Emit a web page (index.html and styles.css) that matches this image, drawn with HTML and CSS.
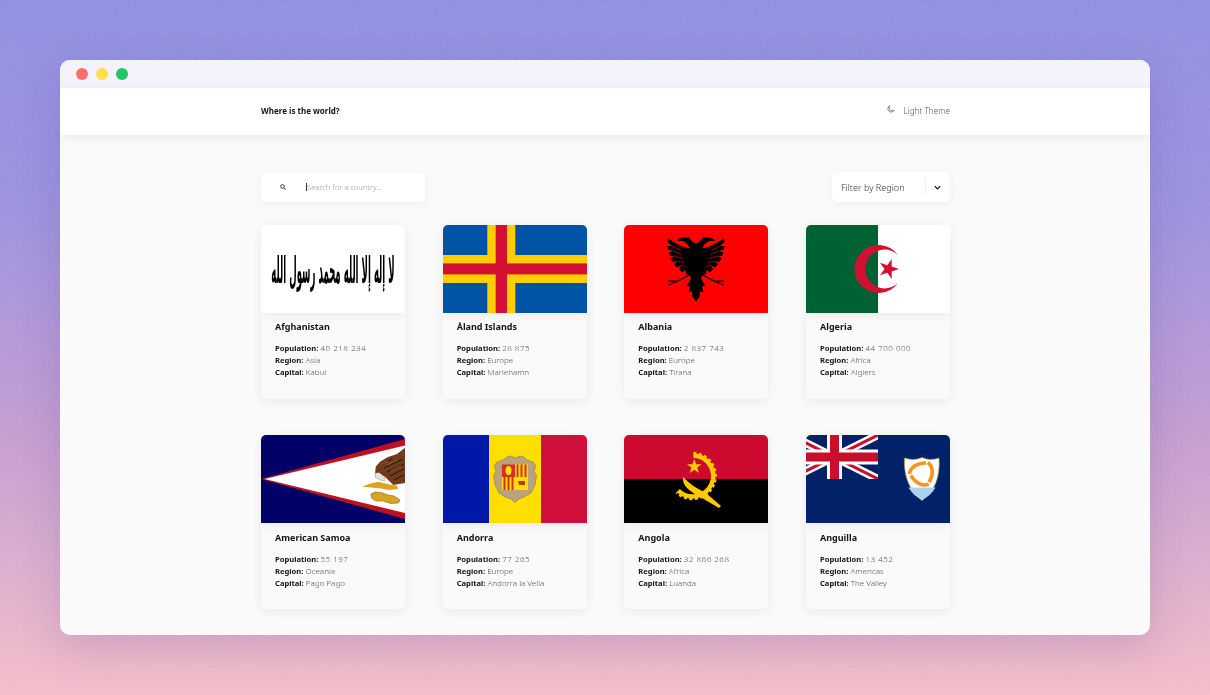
FILE: index.html
```html
<!DOCTYPE html>
<html lang="en">
<head>
    <meta charset="UTF-8">
    <meta name="viewport" content="width=device-width, initial-scale=1.0">
    <title>Where is the world?</title>
    <link rel="stylesheet" href="styles.css">
</head>
<body>
    <svg class="grain" width="1210" height="695" aria-hidden="true">
        <filter id="noise"><feTurbulence type="fractalNoise" baseFrequency="0.8" numOctaves="2" seed="4"/><feColorMatrix type="saturate" values="0"/></filter>
        <rect width="1210" height="695" filter="url(#noise)"/>
    </svg>

    <div class="window">
        <div class="titlebar">
            <span class="dot dot-red"></span>
            <span class="dot dot-yellow"></span>
            <span class="dot dot-green"></span>
        </div>

        <header class="header">
            <div class="wrap header-row">
                <h1 class="logo">Where is the world?</h1>
                <div class="theme">
                    <svg class="moon" viewBox="0 0 10 10" width="8" height="8"><path d="M3.600 .8A4.200 4.200 0 1 0 9 6.600 4 4 0 0 1 3.600 .8Z" fill="none" stroke="#444" stroke-width=".8"/></svg>
                    <span>Light Theme</span>
                </div>
            </div>
        </header>

        <main class="wrap">
            <div class="tools">
                <div class="search">
                    <svg class="lens" viewBox="0 0 10 10" width="6" height="6"><circle cx="4" cy="4" r="3" fill="none" stroke="#222" stroke-width="1.4"/><path d="M6.400 6.400 9.400 9.400" stroke="#222" stroke-width="1.6"/></svg>
                    <span class="caret"></span>
                    <span class="placeholder">Search for a country...</span>
                </div>
                <div class="filter">
                    <span class="filter-label">Filter by Region</span>
                    <span class="filter-line"></span>
                    <svg class="chevron" viewBox="0 0 10 6" width="7" height="5"><path d="M1 1 5 5 9 1" fill="none" stroke="#111" stroke-width="1.8"/></svg>
                </div>
            </div>

            <div class="grid">
                <article class="card">
                    <svg class="flag" viewBox="0 0 144 88" preserveAspectRatio="none">
                        <rect width="144" height="88" fill="#fff"/>
                        <text class="shahada" transform="translate(72 58) scale(1 4.300)" text-anchor="middle" direction="rtl">لا إله إلا الله محمد رسول الله</text>
                    </svg>
                    <div class="card-body">
                        <h2 class="name">Afghanistan</h2>
                        <p class="info"><b>Population:</b> <span class="num">40 218 234</span></p>
                        <p class="info"><b>Region:</b> Asia</p>
                        <p class="info"><b>Capital:</b> Kabul</p>
                    </div>
                </article>

                <article class="card">
                    <svg class="flag" viewBox="0 0 144 88" preserveAspectRatio="none">
                        <rect width="144" height="88" fill="#0053a5"/>
                        <rect x="44.300" width="28" height="88" fill="#ffce00"/>
                        <rect y="30" width="144" height="28" fill="#ffce00"/>
                        <rect x="52.700" width="11.300" height="88" fill="#d21034"/>
                        <rect y="38.400" width="144" height="11" fill="#d21034"/>
                    </svg>
                    <div class="card-body">
                        <h2 class="name">Åland Islands</h2>
                        <p class="info"><b>Population:</b> <span class="num">28 875</span></p>
                        <p class="info"><b>Region:</b> Europe</p>
                        <p class="info"><b>Capital:</b> Mariehamn</p>
                    </div>
                </article>

                <article class="card">
                    <svg class="flag" viewBox="0 0 144 88" preserveAspectRatio="none">
                        <defs>
                            <g id="eagle-half">
                                <path d="M71 19 75.300 17 79.300 12.300 87.700 13 91 15.700 84.300 16.300 80 19.700 78.500 23.500 86 21.500 94 17 100 13.500 100.500 17 96 21 100.500 21 100 24.500 95 26 99.500 27.500 98 31 93.500 31 97.500 33 95.500 37 90.500 36 94 39 91 42.500 87 40.500 89 44 86 47.500 82.500 45 82 49 79 50 77 53 79 57 81 60.500 78 61.500 79.500 67 76 66.500 75.500 72 72 76 71 76Z" fill="#000"/>
                                <path d="M96 21 87 25.500M95 26 86 29.500M93.500 31 85 33.500M90.500 36 84 37.500M87 40.500 82 41.500" stroke="#f00" stroke-width=".6" fill="none"/>
                                <path d="M79 50 91 56.500 99.500 56M91 56.500 99.500 60" stroke="#000" stroke-width="1.300" fill="none"/>
                            </g>
                        </defs>
                        <rect width="144" height="88" fill="#f00"/>
                        <use href="#eagle-half"/>
                        <use href="#eagle-half" transform="translate(144 0) scale(-1 1)"/>
                    </svg>
                    <div class="card-body">
                        <h2 class="name">Albania</h2>
                        <p class="info"><b>Population:</b> <span class="num">2 837 743</span></p>
                        <p class="info"><b>Region:</b> Europe</p>
                        <p class="info"><b>Capital:</b> Tirana</p>
                    </div>
                </article>

                <article class="card">
                    <svg class="flag" viewBox="0 0 144 88" preserveAspectRatio="none">
                        <rect width="144" height="88" fill="#fff"/>
                        <rect width="72" height="88" fill="#006233"/>
                        <path d="M92 30A24 24 0 1 0 92 58 19.400 19.400 0 1 1 92 30Z" fill="#d21034"/>
                        <path d="M93 44 85.700 46.400 85.700 54 81.300 47.800 74 50.200 78.500 44 74 37.800 81.300 40.200 85.700 34 85.700 41.600Z" fill="#d21034"/>
                    </svg>
                    <div class="card-body">
                        <h2 class="name">Algeria</h2>
                        <p class="info"><b>Population:</b> <span class="num">44 700 000</span></p>
                        <p class="info"><b>Region:</b> Africa</p>
                        <p class="info"><b>Capital:</b> Algiers</p>
                    </div>
                </article>

                <article class="card">
                    <svg class="flag" viewBox="0 0 144 88" preserveAspectRatio="none">
                        <rect width="144" height="88" fill="#000066"/>
                        <path d="M0 44 144 4V84Z" fill="#bd1021"/>
                        <path d="M3.500 44 144 10.500V78Z" fill="#fff"/>
                        <path d="M114.700 31.700 119 26.700 127 22 136 19 143.300 13.300 144 13.300V48L132.300 50 124 41.700 114 40Z" fill="#6e3b1c"/>
                        <path d="M121 29 131 24M123 33 142 24M126 37 143 29M129 41 143 34M133 45 143 40" stroke="#3a1a0a" stroke-width="1.200" fill="none"/>
                        <path d="M120 29 128 26M126 30 136 25M130 36 140 31" stroke="#a0662f" stroke-width=".8" fill="none"/>
                        <path d="M114 38.300 118 37.500 124 42 123.300 46 119 45 114.500 42.500Z" fill="#e4e2da" stroke="#555" stroke-width=".3"/>
                        <path d="M101.300 51.700 108 49 117.300 46.700 122 48 130.700 50 136 50.500 137 54 128 55 120 53.500 110 52.500Z" fill="#d9a520"/>
                        <path d="M110 59 114 57 120 57.500 127 60 133 61 139 65 137.500 68 130 68.500 122 66 115 66 110.500 63Z" fill="#d9a520" stroke="#6b4a10" stroke-width=".5"/>
                    </svg>
                    <div class="card-body">
                        <h2 class="name">American Samoa</h2>
                        <p class="info"><b>Population:</b> <span class="num">55 197</span></p>
                        <p class="info"><b>Region:</b> Oceania</p>
                        <p class="info"><b>Capital:</b> Pago Pago</p>
                    </div>
                </article>

                <article class="card">
                    <svg class="flag" viewBox="0 0 144 88" preserveAspectRatio="none">
                        <rect width="46" height="88" fill="#0018a8"/>
                        <rect x="46" width="52" height="88" fill="#fedf00"/>
                        <rect x="98" width="46" height="88" fill="#d0103a"/>
                        <path d="M54 27 60 25 64 22 68 21 72 23 77 21 81 22 84 25 90 27 93 31 91 36 93.500 41 92 50 88 58 81 62 76 64 72 67.500 68 64 62 62 56 58 52 50 50.500 41 53 36 51 31Z" fill="#b9a27c" stroke="#8f7b58" stroke-width=".6"/>
                        <rect x="59" y="29.500" width="13" height="12.500" fill="#d8301f"/>
                        <ellipse cx="65.500" cy="35.500" rx="3" ry="4.500" fill="#fedf00"/>
                        <rect x="72" y="29.500" width="13" height="12.500" fill="#fedf00"/>
                        <path d="M74.500 29.500V42M78.500 29.500V42M82.500 29.500V42" stroke="#d8301f" stroke-width="2"/>
                        <rect x="59" y="42" width="13" height="13" fill="#fedf00"/>
                        <path d="M61.500 42V55M65.500 42V55M69.500 42V55" stroke="#d8301f" stroke-width="2"/>
                        <rect x="72" y="42" width="13" height="13" fill="#fedf00"/>
                        <path d="M75 46H82V50H76Z" fill="#c9321d"/>
                    </svg>
                    <div class="card-body">
                        <h2 class="name">Andorra</h2>
                        <p class="info"><b>Population:</b> <span class="num">77 265</span></p>
                        <p class="info"><b>Region:</b> Europe</p>
                        <p class="info"><b>Capital:</b> Andorra la Vella</p>
                    </div>
                </article>

                <article class="card">
                    <svg class="flag" viewBox="0 0 144 88" preserveAspectRatio="none">
                        <rect width="144" height="44" fill="#cc092f"/>
                        <rect y="44" width="144" height="44" fill="#000"/>
                        <path d="M69.400 20.500A20.500 20.500 0 1 1 54.200 55.500" fill="none" stroke="#ffcb00" stroke-width="4.500"/>
                        <path d="M69.400 18A23 23 0 1 1 52.400 57.300" fill="none" stroke="#ffcb00" stroke-width="2.500" stroke-dasharray="3 2.500"/>
                        <path d="M70.300 24 72.100 29.300 77.700 29.300 73.200 32.600 74.900 38 70.300 34.700 65.700 38 67.400 32.600 62.900 29.300 68.500 29.300Z" fill="#ffcb00"/>
                        <path d="M59.300 41.700C57 50 66 57 78 63L95 73 97 71 82 58C74 54 65 49 59.300 41.700Z" fill="#ffcb00"/>
                    </svg>
                    <div class="card-body">
                        <h2 class="name">Angola</h2>
                        <p class="info"><b>Population:</b> <span class="num">32 866 268</span></p>
                        <p class="info"><b>Region:</b> Africa</p>
                        <p class="info"><b>Capital:</b> Luanda</p>
                    </div>
                </article>

                <article class="card">
                    <svg class="flag" viewBox="0 0 144 88" preserveAspectRatio="none">
                        <rect width="144" height="88" fill="#012169"/>
                        <svg x="0" y="0" width="72" height="44" viewBox="0 0 72 44">
                            <path d="M-16 0 72 44M72 0-16 44" stroke="#fff" stroke-width="8"/>
                            <path d="M-16 0 72 44M72 0-16 44" stroke="#c8102e" stroke-width="3"/>
                            <path d="M28.500 0V44M0 22H72" stroke="#fff" stroke-width="15"/>
                            <path d="M28.500 0V44M0 22H72" stroke="#c8102e" stroke-width="9"/>
                        </svg>
                        <path d="M98.500 23C105 25 110 25 116 22.500 122 25 127 25 133 23 134 36 132 54 116 65.500 101 54 97.500 36 98.500 23Z" fill="#fff" stroke="#9a9a3c" stroke-width=".7"/>
                        <path d="M102.500 52.500H129.500C126.500 58 122 62 116 65 110 62 105.500 58 102.500 52.500Z" fill="#a9d3ee"/>
                        <g fill="none" stroke="#f7931e" stroke-width="3.600">
                            <path d="M103.500 39C104 33 110 28 120 28"/>
                            <path d="M103.500 39C104 33 110 28 120 28" transform="rotate(120 116 38.500)"/>
                            <path d="M103.500 39C104 33 110 28 120 28" transform="rotate(240 116 38.500)"/>
                        </g>
                    </svg>
                    <div class="card-body">
                        <h2 class="name">Anguilla</h2>
                        <p class="info"><b>Population:</b> <span class="num">13 452</span></p>
                        <p class="info"><b>Region:</b> Americas</p>
                        <p class="info"><b>Capital:</b> The Valley</p>
                    </div>
                </article>
            </div>
        </main>
    </div>
</body>
</html>
```

FILE: styles.css
```css
*{padding: 0; margin: 0; box-sizing: border-box;}

html, body{height: 100%; overflow: hidden;}

body{
    position: relative;
    padding: 60px;
    background: linear-gradient(180deg, #8e8de2 0%, #9a90de 30%, #c29bd0 62%, #f3bcc8 100%);
    font-family: "Noto Sans", "Open Sans", sans-serif;
    color: #111517;
}

.grain{
    position: absolute;
    left: 0;
    top: 0;
    opacity: 0.4;
    mix-blend-mode: soft-light;
}

.window{
    position: relative;
    height: 575px;
    border-radius: 10px;
    overflow: hidden;
    background: #fafafa;
    box-shadow: 0 12px 40px rgba(70, 50, 130, 0.18);
}

.titlebar{
    height: 28px;
    padding: 8px 16px;
    display: flex;
    gap: 8px;
    background: #f4f3fb;
}
.dot{width: 12px; height: 12px; border-radius: 50%;}
.dot-red{background: #ff6d6d;}
.dot-yellow{background: #ffdf47;}
.dot-green{background: #20c764;}

.wrap{
    width: 689px;
    margin-left: 201px;
}

.header{
    height: 47px;
    background: #fff;
    box-shadow: 0 2px 10px rgba(0, 0, 0, 0.07);
}
.header-row{
    height: 100%;
    display: flex;
    align-items: center;
    justify-content: space-between;
}
.logo{margin-bottom: 3px; font-size: 8px; font-weight: 700;}
.theme{
    display: flex;
    align-items: center;
    gap: 9px;
    margin-bottom: 3px;
    font-size: 8.200px;
    font-weight: 300;
    color: #555;
}
.moon{margin-bottom: 2px;}

.tools{
    margin-top: 37px;
    display: flex;
    align-items: center;
    justify-content: space-between;
}
.search{
    width: 164px;
    height: 29px;
    padding-left: 19px;
    display: flex;
    align-items: center;
    background: #fff;
    border-radius: 5px;
    box-shadow: 0 2px 10px rgba(0, 0, 0, 0.05);
}
.caret{
    width: 1px;
    height: 8px;
    margin-left: 20px;
    background: #333;
}
.placeholder{font-size: 7.600px; font-weight: 300; color: #999;}

.filter{
    width: 118px;
    height: 30px;
    padding-left: 9px;
    display: flex;
    align-items: center;
    background: #fff;
    border-radius: 5px;
    box-shadow: 0 2px 10px rgba(0, 0, 0, 0.05);
    font-size: 9.100px;
    font-weight: 300;
    color: #333;
}
.filter-label{width: 84px; white-space: nowrap;}
.filter-line{width: 1px; height: 16px; background: #eee;}
.chevron{margin-left: 8px;}

.grid{
    margin-top: 23px;
    display: grid;
    grid-template-columns: repeat(4, 144px);
    justify-content: space-between;
    row-gap: 36.900px;
}
.card{
    height: 173.500px;
    border-radius: 5px;
    overflow: hidden;
    background: #fafafa;
    box-shadow: 0 2px 12px rgba(0, 0, 0, 0.07);
}
.flag{
    display: block;
    width: 144px;
    height: 88px;
    box-shadow: 0 3px 10px rgba(0, 0, 0, 0.06);
}
.shahada{
    font-family: "DejaVu Sans", sans-serif;
    font-size: 8.600px;
    font-weight: 700;
    fill: #000;
}
.card-body{padding: 8.200px 14px 8px;}
.name{
    margin-bottom: 9px;
    font-size: 9px;
    line-height: 12px;
    font-weight: 700;
}
.info{
    font-size: 8px;
    font-weight: 300;
    line-height: 12px;
    color: #555;
}
.info b{font-size: 7.600px; color: #111517; font-weight: 700;}
.num{letter-spacing: 0.5px;}
```
